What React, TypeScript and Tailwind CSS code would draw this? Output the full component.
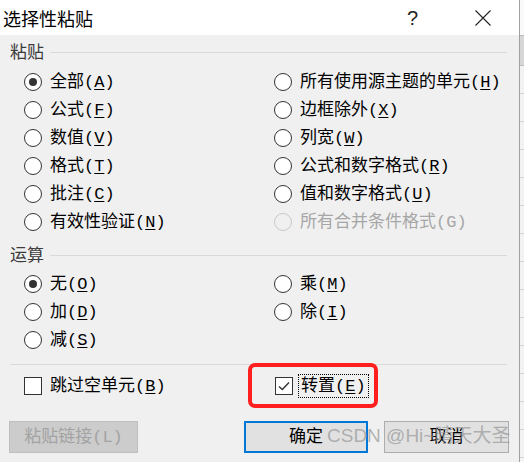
import React from "react";

const SONG = "font-['Liberation_Serif','Noto_Sans_CJK_SC',serif]";
const MONO = "font-['Liberation_Mono',monospace]";

interface OptionProps {
  label: string;
  hotkey: string;
  checked?: boolean;
  disabled?: boolean;
}

function Key({ hotkey, plain }: { hotkey: string; plain?: boolean }) {
  return (
    <span className={`${MONO} text-[17px]`}>
      ({plain ? hotkey : <span className="underline underline-offset-2">{hotkey}</span>})
    </span>
  );
}

function Radio({ label, hotkey, checked, disabled }: OptionProps) {
  return (
    <div className="h-[28px] flex items-center">
      <span
        className={`w-[18px] h-[18px] rounded-full border flex items-center justify-center shrink-0 ${
          disabled ? "border-[#c8c8c8] bg-[#f0f0f0]" : "border-[#333333] bg-white"
        }`}
      >
        {checked && <span className="w-[8px] h-[8px] rounded-full bg-[#333333]" />}
      </span>
      <span
        className={`ml-[8px] text-[17px] leading-none whitespace-nowrap ${
          disabled ? "text-[#a6a6a6]" : "text-black"
        }`}
      >
        {label}
        <Key hotkey={hotkey} plain={disabled} />
      </span>
    </div>
  );
}

function Heading({ text }: { text: string }) {
  return (
    <div className="h-[20px] flex items-center pl-[10px] pr-[12px]">
      <span className="text-[17px] leading-none text-[#3c3c3c]">{text}</span>
      <div className="flex-1 h-px bg-[#d9d9d9] ml-[6px]" />
    </div>
  );
}

function Check({ label, hotkey, checked, focused }: OptionProps & { focused?: boolean }) {
  return (
    <div className="h-[28px] flex items-center">
      <span className="w-[18px] h-[18px] border border-[#333333] bg-white flex items-center justify-center shrink-0">
        {checked && (
          <svg width="12" height="10" viewBox="0 0 12 10">
            <path d="M1 5.5 L4.3 8.5 L11 1.5" fill="none" stroke="#333" strokeWidth="1.4" />
          </svg>
        )}
      </span>
      <span
        className={`ml-[5px] px-[2px] py-[2px] text-[17px] leading-none whitespace-nowrap text-black border border-dotted ${
          focused ? "border-black" : "border-transparent"
        }`}
      >
        {label}
        <Key hotkey={hotkey} />
      </span>
    </div>
  );
}

export default function App() {
  return (
    <div className={`relative w-[524px] h-[462px] flex overflow-hidden ${SONG}`}>
      <div className="w-[519px] flex flex-col">
        {/* Title bar */}
        <div className="h-[35px] bg-white flex items-center shrink-0">
          <span className="ml-[3px] text-[18px] leading-none text-black font-['Noto_Sans_CJK_SC',sans-serif]">
            选择性粘贴
          </span>
          <span className="ml-auto mr-[57px] text-[20px] leading-none text-[#222] font-['Liberation_Sans',sans-serif]">
            ?
          </span>
          <svg width="16" height="16" viewBox="0 0 16 16" className="mr-[28px]">
            <path d="M0.5 0.5 L15.5 15.5 M15.5 0.5 L0.5 15.5" stroke="#222" strokeWidth="1.1" />
          </svg>
        </div>

        {/* Body */}
        <div className="flex-1 bg-[#f0f0f0] flex flex-col">
          <div className="mt-[7px]">
            <Heading text="粘贴" />
          </div>
          <div className="mt-[6px] grid grid-cols-[250px_1fr] pl-[24px]">
            <Radio label="全部" hotkey="A" checked />
            <Radio label="所有使用源主题的单元" hotkey="H" />
            <Radio label="公式" hotkey="F" />
            <Radio label="边框除外" hotkey="X" />
            <Radio label="数值" hotkey="V" />
            <Radio label="列宽" hotkey="W" />
            <Radio label="格式" hotkey="T" />
            <Radio label="公式和数字格式" hotkey="R" />
            <Radio label="批注" hotkey="C" />
            <Radio label="值和数字格式" hotkey="U" />
            <Radio label="有效性验证" hotkey="N" />
            <Radio label="所有合并条件格式" hotkey="G" disabled />
          </div>

          <div className="mt-[9px]">
            <Heading text="运算" />
          </div>
          <div className="mt-[5px] grid grid-cols-[250px_1fr] pl-[24px]">
            <Radio label="无" hotkey="O" checked />
            <Radio label="乘" hotkey="M" />
            <Radio label="加" hotkey="D" />
            <Radio label="除" hotkey="I" />
            <Radio label="减" hotkey="S" />
          </div>

          <div className="mt-[10px] ml-[10px] mr-[12px] h-px bg-[#d9d9d9]" />

          <div className="mt-[7px] grid grid-cols-[251px_1fr] pl-[24px]">
            <Check label="跳过空单元" hotkey="B" />
            <Check label="转置" hotkey="E" checked focused />
          </div>

          {/* Buttons */}
          <div className="mt-[21px] flex">
            <button className="ml-[9px] w-[129px] h-[32px] bg-[#cccccc] border border-[#bfbfbf] text-[17px] text-[#a3a3a3]">
              粘贴链接<span className={MONO}>(L)</span>
            </button>
            <button className="ml-[106px] w-[124px] h-[32px] bg-[#e1e1e1] border-2 border-[#0078d7] text-[17px] text-black">
              确定
            </button>
            <button className="ml-[16px] w-[125px] h-[32px] bg-[#e1e1e1] border border-[#adadad] text-[17px] text-black">
              取消
            </button>
          </div>
        </div>
      </div>

      {/* Spreadsheet behind the dialog */}
      <div className="flex-1 border-l border-[#a0a0a0] bg-[#f3f3f3] flex flex-col">
        <div className="h-[36px] bg-[#fafafa] border-b border-[#bdbdbd]" />
        <div className="h-[30px] bg-[#d6d6d6] border-b border-[#bdbdbd]" />
        {Array.from({ length: 14 }).map((_, i) => (
          <div key={i} className="h-[28px] border-b border-[#d4d4d4]" />
        ))}
      </div>

      {/* Red highlight around 转置 */}
      <div className="absolute left-[248px] top-[363px] w-[130px] h-[45px] border-4 border-[#ff1f1f] rounded-[7px]" />

      {/* Watermark */}
      <div className="absolute left-[327px] top-[426px] text-[19px] leading-none whitespace-nowrap text-[rgba(150,150,150,0.7)] font-['Liberation_Sans','Noto_Sans_CJK_SC',sans-serif]">
        CSDN @Hi~晴天大圣
      </div>
    </div>
  );
}
